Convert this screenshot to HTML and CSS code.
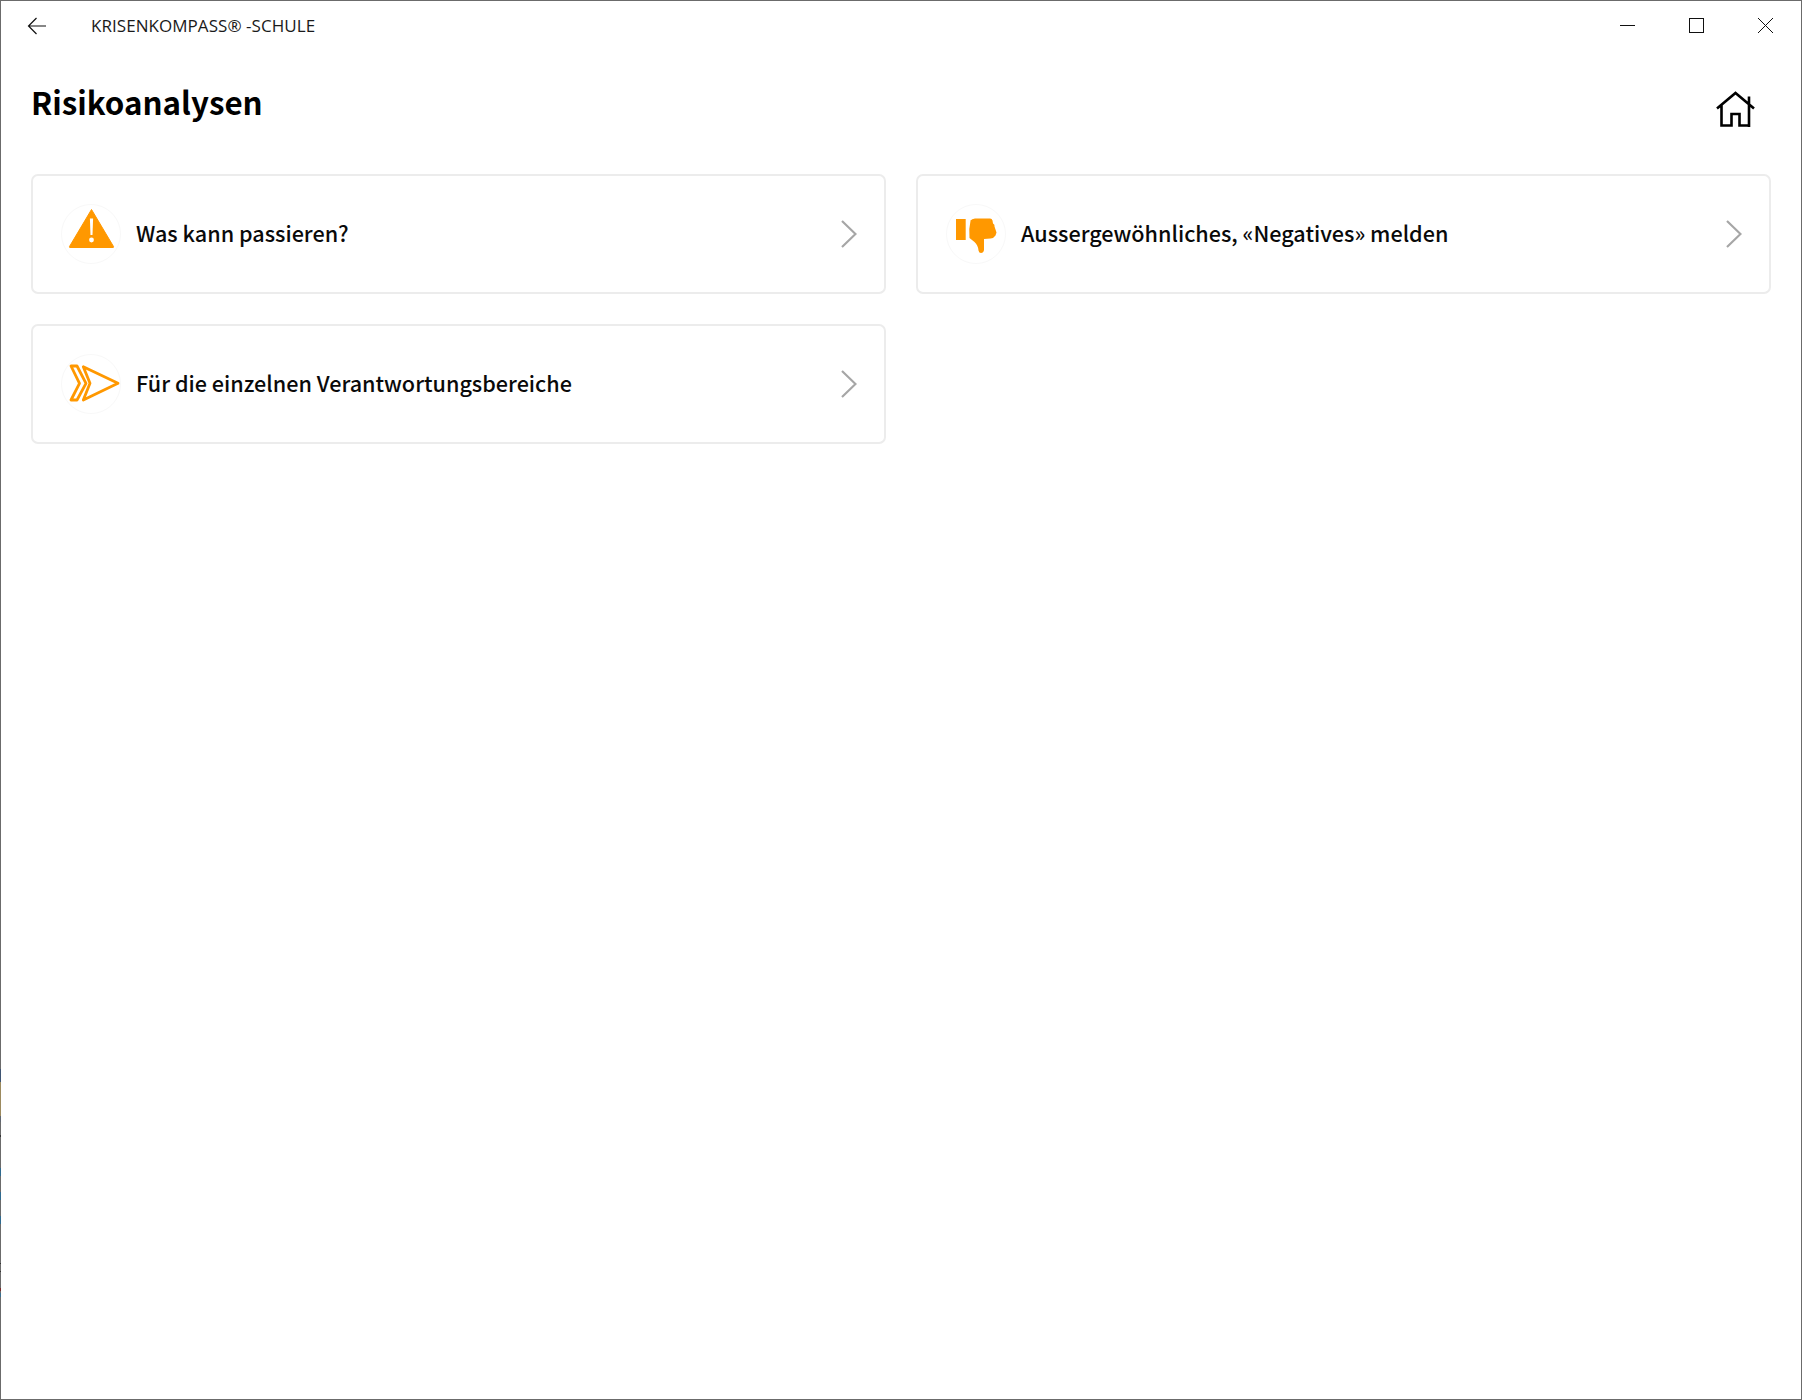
FILE: index.html
```html
<!DOCTYPE html>
<html lang="de">
<head>
  <meta charset="UTF-8" />
  <title>KRISENKOMPASS®-SCHULE</title>
  <link rel="stylesheet" href="styles.css">
</head>
<body>
  <div class="window">
    <div class="edge"></div>
    <div class="titlebar">
      <svg class="back" width="20" height="18" viewBox="0 0 20 18"><path d="M19 9H1.500M9.500 1 1.500 9l8 8" fill="none" stroke="#111" stroke-width="1.200"/></svg>
      <span class="app-name">KRISENKOMPASS® -SCHULE</span>
      <div class="controls">
        <svg width="17" height="17" viewBox="0 0 17 17"><path d="M1 8.500h15" stroke="#111" stroke-width="1"/></svg>
        <svg width="17" height="17" viewBox="0 0 17 17"><rect x="1.500" y="1.500" width="14" height="14" fill="none" stroke="#111" stroke-width="1"/></svg>
        <svg width="17" height="17" viewBox="0 0 17 17"><path d="M1 1l15 15M16 1 1 16" stroke="#111" stroke-width="1"/></svg>
      </div>
    </div>

    <div class="page-head">
      <h1>Risikoanalysen</h1>
      <svg class="home" width="40" height="36" viewBox="0 0 40 36"><path d="M1 17.500 19.500 2l18.500 15.500M33 5.500v31M5.500 14v20.500h10V23h8v11.500H33" fill="none" stroke="#000" stroke-width="2.600"/></svg>
    </div>

    <div class="cards">
      <div class="card">
        <svg class="badge" width="60" height="60" viewBox="0 0 60 60">
          <circle cx="30" cy="30" r="29.500" fill="#fff" stroke="#f8f8f8"/>
          <path d="M30.500 5.500 52.500 42.500a.6.6 0 0 1-.5 1h-43a.6.6 0 0 1-.5-1Z" fill="#ff9800" stroke="#ff9800" stroke-linejoin="round"/>
          <path d="M28.900 14.500h3.200L31.500 31h-2Z" fill="#fff"/>
          <circle cx="30.500" cy="36" r="2.400" fill="#fff"/>
        </svg>
        <span class="label">Was kann passieren?</span>
        <svg class="chevron" width="16" height="28" viewBox="0 0 16 28"><path d="M1 1l13.500 13L1 27" fill="none" stroke="#a6a6a6" stroke-width="2.200"/></svg>
      </div>
      <div class="card">
        <svg class="badge" width="60" height="60" viewBox="0 0 60 60">
          <circle cx="30" cy="30" r="29.500" fill="#fff" stroke="#f8f8f8"/>
          <path d="M10 15h9.700v21H10Z" fill="#ff9800"/>
          <path d="M24 17q2-2.500 5-2.500h15q2 0 2.500 2l.5 3q2 1 1.500 3l1 3 1 3-1 3q-2 3-5 3l-6.500.5V46q-.5 3-3 3-2 0-2.500-2.500-.5-5.500-4-8.500l-5-4q-1-9 1-17Z" fill="#ff9800"/>
        </svg>
        <span class="label">Aussergewöhnliches, «Negatives» melden</span>
        <svg class="chevron" width="16" height="28" viewBox="0 0 16 28"><path d="M1 1l13.500 13L1 27" fill="none" stroke="#a6a6a6" stroke-width="2.200"/></svg>
      </div>
      <div class="card">
        <svg class="badge" width="60" height="60" viewBox="0 0 60 60">
          <circle cx="30" cy="30" r="29.500" fill="#fff" stroke="#f8f8f8"/>
          <path d="M10 12h6l9 17.300L16 46h-6l8.500-16.700Z" fill="none" stroke="#ff9800" stroke-width="2.800" stroke-linejoin="round"/>
          <path d="M22.300 12.700 57 29.300 22.300 46 29 29.300Z" fill="none" stroke="#ff9800" stroke-width="2.800" stroke-linejoin="round"/>
        </svg>
        <span class="label">Für die einzelnen Verantwortungsbereiche</span>
        <svg class="chevron" width="16" height="28" viewBox="0 0 16 28"><path d="M1 1l13.500 13L1 27" fill="none" stroke="#a6a6a6" stroke-width="2.200"/></svg>
      </div>
    </div>
  </div>
</body>
</html>
```

FILE: styles.css
```css
* {
  box-sizing: border-box;
  margin: 0;
  padding: 0;
}

body {
  background-color: #fff;
  color: #000;
}

.window {
  position: relative;
  height: 1400px;
  border: 1px solid #6b6b6b;
  display: flex;
  flex-direction: column;
}

/* what shows through the left window edge */
.edge {
  position: absolute;
  left: -1px;
  top: 1068px;
  width: 1px;
  height: 228px;
  background: linear-gradient(to bottom,
    #3f5573 0 13px,
    #9c8a5e 13px 47px,
    #5f6670 47px 53px,
    #6b6b6b 53px 66px,
    #333 66px 68px,
    #6b6b6b 68px 99px,
    #2f6a8f 99px 107px,
    #6b6b6b 107px 123px,
    #2f6a8f 123px 131px,
    #6b6b6b 131px 147px,
    #2f6a8f 147px 155px,
    #6b6b6b 155px 194px,
    #333 194px 195px,
    #6b6b6b 195px 202px,
    #333 202px 203px,
    #6b6b6b 203px 219px,
    #7a2a2a 219px 222px,
    #6b6b6b 222px 224px,
    #3a6f8f 224px 228px);
}

.titlebar {
  height: 49px;
  display: flex;
  align-items: center;
  padding: 0 27px 0 26px;
}

.back {
  margin-right: 44px;
}

.app-name {
  font-family: "Open Sans", sans-serif;
  font-size: 17px;
  letter-spacing: 0.05px;
  color: #1a1a1a;
}

.controls {
  margin-left: auto;
  display: flex;
  gap: 52px;
}

.page-head {
  display: flex;
  justify-content: space-between;
  align-items: flex-start;
  padding: 29px 45px 0 30px;
  height: 124px;
}

.page-head h1 {
  font-family: "Noto Sans CJK SC", "Noto Sans", sans-serif;
  font-size: 31.300px;
  font-weight: 700;
  line-height: 46px;
}

.home {
  margin-top: 12px;
}

.cards {
  display: grid;
  grid-template-columns: 1fr 1fr;
  gap: 30px;
  padding: 0 30px;
}

.card {
  height: 120px;
  border: 2px solid #ececec;
  border-radius: 7px;
  display: flex;
  align-items: center;
  padding: 0 27px 0 28px;
}

.badge {
  flex-shrink: 0;
  margin-right: 15px;
}

.label {
  font-family: "Noto Sans CJK SC", "Noto Sans", sans-serif;
  font-size: 21.600px;
  font-weight: 500;
  color: #0a0a0a;
  padding-bottom: 4px;
}

.chevron {
  margin-left: auto;
}
```
